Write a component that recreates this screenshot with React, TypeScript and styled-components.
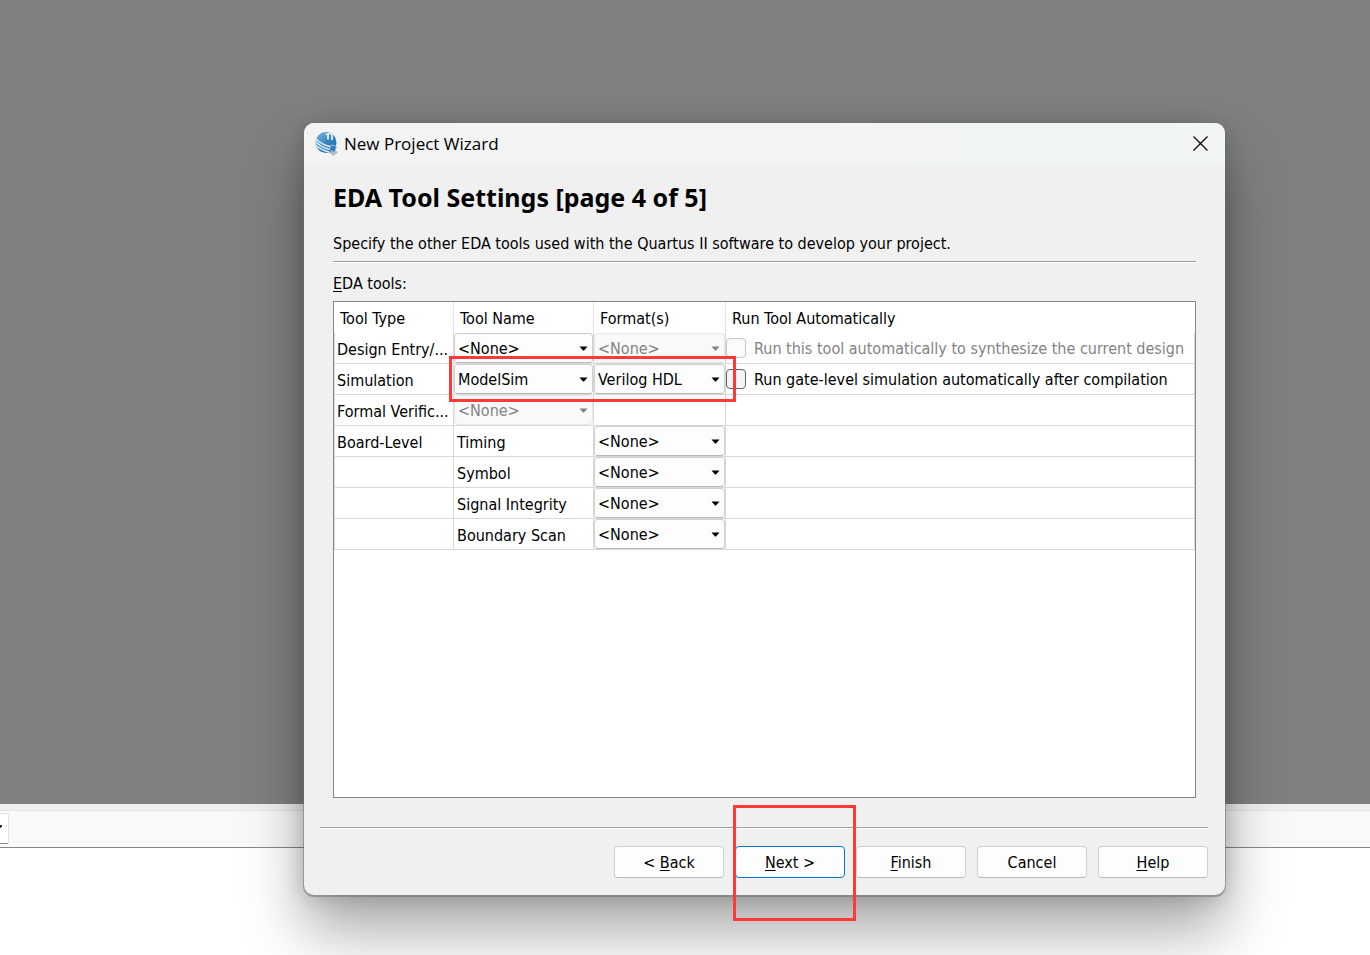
import React from 'react';
import styled, { createGlobalStyle } from 'styled-components';

const GlobalStyle = createGlobalStyle`
  *, *::before, *::after { box-sizing: border-box; }
  body {
    margin: 0;
    background: #fff;
    color: #000;
    font: 16px/20px 'DejaVu Sans Condensed', 'Noto Sans', sans-serif;
  }
  button, select, input { font: inherit; color: inherit; margin: 0; }
`;

const Screen = styled.div`
  display: grid;
  min-height: 100vh;
  overflow: hidden;

  & > * { grid-area: 1 / 1; min-width: 0; }
`;

const MainWindow = styled.div`
  display: flex;
  flex-direction: column;
`;

const Workspace = styled.div`
  flex: 1;
  background: #808080;
`;

const Splitter = styled.div`
  height: 7px;
  background: #f0f0f0;
  border-bottom: 1px solid #e5e5e5;
`;

const FilterBar = styled.div`
  display: flex;
  align-items: flex-start;
  height: 37px;
  padding-top: 2px;
  background: #f9f9f9;
  border-bottom: 1px solid #828790;
`;

const FilterBox = styled.div`
  display: flex;
  align-items: center;
  width: 9px;
  height: 31px;
  padding-bottom: 4px;
  background: #fff;
  border: 1px solid #e0e0e0;
  border-left: 0;
  border-bottom-color: #868686;
  border-radius: 0 2px 2px 0;
`;

const Messages = styled.div`
  height: 107px;
  background: #fff;
`;

const ModalLayer = styled.div`
  display: flex;
  position: relative;
  padding: 123px 145px 60px 304px;
`;

const Dialog = styled.section`
  display: flex;
  flex: 1;
  flex-direction: column;
  min-width: 0;
  background: #f0f0f0;
  border-radius: 10px;
  box-shadow: 0 1px 0 1px rgba(110, 110, 110, 0.5), 0 36px 60px rgba(0, 0, 0, 0.34),
    0 2px 21px rgba(0, 0, 0, 0.18);
`;

const TitleBar = styled.header`
  display: flex;
  align-items: center;
  gap: 6px;
  height: 43px;
  padding: 0 12px 2px 11px;
  background: linear-gradient(90deg, #f3f3f3, #f0f4f5);
  border-radius: 10px 10px 0 0;
`;

const WindowTitle = styled.span`
  flex: 1;
  font-family: 'Open Sans', 'Noto Sans', sans-serif;
  font-size: 17px;
  line-height: 24px;
`;

const CloseButton = styled.button`
  display: flex;
  align-items: center;
  justify-content: center;
  width: 25px;
  height: 25px;
  padding: 0;
  border: 0;
  background: none;
`;

const Page = styled.div`
  display: flex;
  flex: 1;
  flex-direction: column;
  padding: 15px 29px 29px;
`;

const Heading = styled.h1`
  margin: 0;
  font-family: 'Noto Sans', sans-serif;
  font-size: 25px;
  line-height: 32px;
  font-weight: 700;
`;

const Intro = styled.p`
  margin: 21px 0 7px;
`;

const Rule = styled.hr`
  flex: none;
  height: 2px;
  margin: 0;
  border: 0;
  border-top: 1px solid #a0a0a0;
  background: #fff;
`;

const FooterRule = styled(Rule)`
  margin: 0 17px 0 16px;
`;

const TableCaption = styled.div`
  margin: 11px 0 7px;
`;

const TablePane = styled.div`
  flex: 1;
  background: #fff;
  border: 1px solid #828790;
`;

const ToolTable = styled.table`
  width: 100%;
  table-layout: fixed;
  border-collapse: separate;
  border-spacing: 0;
`;

const Column = styled.col<{ $width?: number }>`
  width: ${({ $width }) => ($width ? `${$width}px` : 'auto')};
`;

const HeadCell = styled.th`
  height: 31px;
  padding: 2px 6px 0;
  font-weight: 400;
  text-align: left;
  white-space: nowrap;
  border-right: 1px solid #e5e5e5;

  &:last-child { border-right: 0; }
`;

const Cell = styled.td<{ $flush?: boolean }>`
  position: relative;
  height: 31px;
  padding: ${({ $flush }) => ($flush ? '0' : '3px 3px 0')};
  overflow: ${({ $flush }) => ($flush ? 'visible' : 'hidden')};
  white-space: nowrap;
  border-right: 1px solid #d8d8d8;
  border-bottom: 1px solid #d8d8d8;

  &:first-child { border-left: 1px solid #d8d8d8; padding-left: 2px; }
`;

const ComboFrame = styled.div<{ $disabled?: boolean }>`
  position: relative;
  height: 30px;
  color: ${({ $disabled }) => ($disabled ? '#838383' : '#000')};

  svg {
    position: absolute;
    top: 13px;
    right: 5px;
    pointer-events: none;
  }
`;

const ComboSelect = styled.select`
  display: block;
  width: 100%;
  height: 30px;
  padding: 2px 18px 0 3px;
  appearance: none;
  background: #fdfdfd;
  border: 1px solid #d0d0d0;
  border-bottom-color: #b8b8b8;
  border-radius: 4px;
  color: inherit;
  opacity: 1;

  &:disabled { background: #f9f9f9; border-color: #e8e8e8; }
`;

const CheckLabel = styled.label<{ $disabled?: boolean }>`
  display: flex;
  align-items: center;
  gap: 8px;
  height: 30px;
  color: ${({ $disabled }) => ($disabled ? '#838383' : '#000')};

  span { padding-top: 2px; }
`;

const CheckBox = styled.input`
  flex: none;
  width: 20px;
  height: 20px;
  appearance: none;
  background: #f5f5f5;
  border: 1px solid #626262;
  border-radius: 4px;

  &:disabled { background: #fbfbfb; border-color: #c5c5c5; }
`;

const ButtonRow = styled.footer`
  display: flex;
  justify-content: flex-end;
  gap: 11px;
  padding: 17px;
`;

const PushButton = styled.button<{ $primary?: boolean }>`
  width: 110px;
  height: 32px;
  padding: 2px 0 0;
  background: #fdfdfd;
  border: 1px solid ${({ $primary }) => ($primary ? '#0078d4' : '#d0d0d0')};
  border-bottom-color: ${({ $primary }) => ($primary ? '#0078d4' : '#b8b8b8')};
  border-radius: 4px;
`;

const Key = styled.span`
  text-decoration: underline;
  text-underline-offset: 2px;
  text-decoration-thickness: 1px;
  text-decoration-skip-ink: none;
`;

const Marked = styled.div`
  position: relative;
`;

const RedMark = styled.span<{ $top: number; $left: number; $width: number; $height: number }>`
  position: absolute;
  z-index: 2;
  top: ${({ $top }) => $top}px;
  left: ${({ $left }) => $left}px;
  width: ${({ $width }) => $width}px;
  height: ${({ $height }) => $height}px;
  border: 3px solid #ff3838;
  pointer-events: none;
`;

const Arrow = () => (
  <svg width="9" height="5" viewBox="0 0 9 5" fill="currentColor" aria-hidden="true">
    <path d="M0.500 0.500h8L5 4.500H4z" />
  </svg>
);

const AppIcon = () => (
  <svg width="23" height="25" viewBox="0 0 23 25" aria-hidden="true">
    <defs>
      <linearGradient id="globe" x1="0" y1="0" x2="1" y2="1">
        <stop offset="0" stopColor="#7dbbe4" />
        <stop offset="0.5" stopColor="#3784c0" />
        <stop offset="1" stopColor="#1d68ad" />
      </linearGradient>
      <clipPath id="disc">
        <circle cx="11" cy="11.500" r="10.500" />
      </clipPath>
    </defs>
    <path d="M14 21l5-3 4 3.500-5 3.500z" fill="#b4bcc4" />
    <circle cx="11" cy="11.500" r="10.500" fill="url(#globe)" />
    <g clipPath="url(#disc)">
      <path d="M0 7c4 4.500 9 7.500 17 9M0 10c4 4.500 8 7 15 8.500M0 13.500c4 4 8 6 14 7.500" fill="none" stroke="#e4eff8" strokeWidth="1.300" />
      <path d="M10.500 3.500l9-2M13 3.500v5M17 3v6" fill="none" stroke="#f2f7fb" strokeWidth="1.700" />
    </g>
    <rect x="15" y="14.500" width="6" height="6" rx="1" transform="rotate(20 18 17)" fill="#2f7dbb" stroke="#a9cce6" strokeWidth="0.800" />
  </svg>
);

const Combo = ({ value, label, disabled }: { value: string; label: string; disabled?: boolean }) => (
  <ComboFrame $disabled={disabled}>
    <ComboSelect aria-label={label} defaultValue={value} disabled={disabled}>
      <option>{value}</option>
    </ComboSelect>
    <Arrow />
  </ComboFrame>
);

type Choice = { value: string; disabled?: boolean };
type ToolRow = {
  type: string;
  name: string | Choice;
  format?: Choice;
  run?: { text: string; disabled?: boolean };
  marked?: boolean;
};

const rows: ToolRow[] = [
  {
    type: 'Design Entry/...',
    name: { value: '<None>' },
    format: { value: '<None>', disabled: true },
    run: { text: 'Run this tool automatically to synthesize the current design', disabled: true },
  },
  {
    type: 'Simulation',
    name: { value: 'ModelSim' },
    format: { value: 'Verilog HDL' },
    run: { text: 'Run gate-level simulation automatically after compilation' },
    marked: true,
  },
  { type: 'Formal Verific...', name: { value: '<None>', disabled: true } },
  { type: 'Board-Level', name: 'Timing', format: { value: '<None>' } },
  { type: '', name: 'Symbol', format: { value: '<None>' } },
  { type: '', name: 'Signal Integrity', format: { value: '<None>' } },
  { type: '', name: 'Boundary Scan', format: { value: '<None>' } },
];

const ToolRowView = ({ row }: { row: ToolRow }) => (
  <tr>
    <Cell>{row.type}</Cell>
    {typeof row.name === 'string' ? (
      <Cell>{row.name}</Cell>
    ) : (
      <Cell $flush>
        <Combo {...row.name} label={`${row.type} tool name`} />
        {row.marked && <RedMark $top={-8} $left={-5} $width={287} $height={46} />}
      </Cell>
    )}
    <Cell $flush>{row.format && <Combo {...row.format} label={`${row.type} format`} />}</Cell>
    <Cell $flush>
      {row.run && (
        <CheckLabel $disabled={row.run.disabled}>
          <CheckBox type="checkbox" disabled={row.run.disabled} />
          <span>{row.run.text}</span>
        </CheckLabel>
      )}
    </Cell>
  </tr>
);

export default function App() {
  return (
    <>
      <GlobalStyle />
      <Screen>
        <MainWindow>
          <Workspace />
          <Splitter />
          <FilterBar>
            <FilterBox>
              <svg width="3" height="4" viewBox="0 0 3 4" aria-hidden="true">
                <path d="M0 0h2v2H1v1H0z" fill="#222" />
              </svg>
            </FilterBox>
          </FilterBar>
          <Messages />
        </MainWindow>
        <ModalLayer>
          <Dialog role="dialog" aria-label="New Project Wizard">
            <TitleBar>
              <AppIcon />
              <WindowTitle>New Project Wizard</WindowTitle>
              <CloseButton aria-label="Close">
                <svg width="15" height="15" viewBox="0 0 15 15" aria-hidden="true">
                  <path d="M0.500 0.500l14 14M14.500 0.500L0.500 14.500" stroke="#111" strokeWidth="1.400" />
                </svg>
              </CloseButton>
            </TitleBar>
            <Page>
              <Heading>EDA Tool Settings [page 4 of 5]</Heading>
              <Intro>Specify the other EDA tools used with the Quartus II software to develop your project.</Intro>
              <Rule />
              <TableCaption id="tools-caption">
                <Key>E</Key>DA tools:
              </TableCaption>
              <TablePane>
                <ToolTable aria-labelledby="tools-caption">
                  <colgroup>
                    <Column $width={120} />
                    <Column $width={140} />
                    <Column $width={132} />
                    <Column />
                  </colgroup>
                  <thead>
                    <tr>
                      <HeadCell>Tool Type</HeadCell>
                      <HeadCell>Tool Name</HeadCell>
                      <HeadCell>Format(s)</HeadCell>
                      <HeadCell>Run Tool Automatically</HeadCell>
                    </tr>
                  </thead>
                  <tbody>
                    {rows.map((row, i) => (
                      <ToolRowView key={i} row={row} />
                    ))}
                  </tbody>
                </ToolTable>
              </TablePane>
            </Page>
            <FooterRule />
            <ButtonRow>
              <PushButton>&lt; <Key>B</Key>ack</PushButton>
              <Marked>
                <PushButton $primary><Key>N</Key>ext &gt;</PushButton>
                <RedMark $top={-41} $left={-2} $width={123} $height={116} />
              </Marked>
              <PushButton><Key>F</Key>inish</PushButton>
              <PushButton>Cancel</PushButton>
              <PushButton><Key>H</Key>elp</PushButton>
            </ButtonRow>
          </Dialog>
        </ModalLayer>
      </Screen>
    </>
  );
}
